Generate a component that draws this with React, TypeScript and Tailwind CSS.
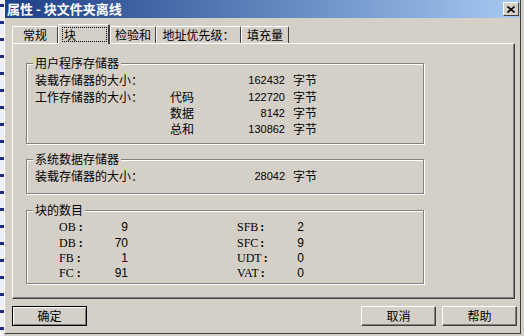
import React from "react";

const cjk = "font-['Noto_Sans_CJK_SC','Liberation_Sans',sans-serif]";
const num = "font-['Liberation_Sans','Noto_Sans_CJK_SC',sans-serif]";
const ser = "font-['Liberation_Serif','Noto_Sans_CJK_SC',serif]";

function Group({ label, children, className }: { label: string; children: React.ReactNode; className?: string }) {
  return (
    <div className={"relative border border-[#808080] shadow-[1px_1px_0_#ffffff,inset_1px_1px_0_#ffffff] " + (className || "")}>
      <div className={"absolute left-[6px] top-[-9px] h-[16px] px-[2px] bg-[#d4d0c8] text-[12px] leading-[16px] text-black " + cjk}>
        {label}
      </div>
      {children}
    </div>
  );
}

function MemRow({ a, b, n }: { a?: string; b?: string; n: string }) {
  return (
    <div className="flex h-[16px] items-center text-[12px] text-black">
      <div className={"w-[143px] pl-[8px] leading-[16px] " + cjk}>{a}</div>
      <div className={"w-[53px] leading-[16px] " + cjk}>{b}</div>
      <div className={"w-[62px] text-right text-[11px] leading-[16px] " + num}>{n}</div>
      <div className={"ml-[8px] leading-[16px] " + cjk}>字节</div>
    </div>
  );
}

function BlkRow({ a, av, b, bv, h }: { a: string; av: string; b: string; bv: string; h: string }) {
  return (
    <div className={"flex items-center text-black " + h}>
      <div className="w-[32px]" />
      <div className={"flex w-[30px] whitespace-nowrap text-[12px] leading-[15px] " + ser}>
        <span>{a}</span>
        <span className="ml-[3px] font-bold">:</span>
      </div>
      <div className={"w-[39px] text-right text-[12px] leading-[15px] " + num}>{av}</div>
      <div className="w-[109px]" />
      <div className={"flex w-[30px] whitespace-nowrap text-[12px] leading-[15px] " + ser}>
        <span>{b}</span>
        <span className="ml-[2px] font-bold">:</span>
      </div>
      <div className={"w-[37px] text-right text-[12px] leading-[15px] " + num}>{bv}</div>
    </div>
  );
}

function Tab({ label, w, selected }: { label: string; w: string; selected?: boolean }) {
  if (selected) {
    return (
      <div className={"relative z-10 h-[20px] -mb-[1px] bg-[#d4d0c8] border-t border-l border-white border-r-2 border-r-[#404040] rounded-t-[2px] pl-[3px] pt-[2px] " + w}>
        <div className={"h-[15px] w-[45px] border border-dotted border-black pl-[1px] text-[12px] leading-[13px] text-black " + cjk}>
          {label}
        </div>
      </div>
    );
  }
  return (
    <div className={"mt-[2px] h-[17px] bg-[#d4d0c8] border-t border-l border-white border-r border-r-[#404040] rounded-t-[2px] text-center text-[12px] leading-[16px] text-black " + cjk + " " + w}>
      {label}
    </div>
  );
}

function Btn({ label, def }: { label: string; def?: boolean }) {
  return (
    <div
      className={
        "h-[20px] w-[75px] flex items-center justify-center bg-[#d4d0c8] text-[12px] text-black " +
        cjk +
        (def
          ? " border border-black shadow-[inset_1px_1px_0_#ffffff,inset_-1px_-1px_0_#808080]"
          : " border-t border-l border-white border-r border-b border-r-[#404040] border-b-[#404040] shadow-[inset_-1px_-1px_0_#808080]")
      }
    >
      {label}
    </div>
  );
}

export default function App() {
  return (
    <div className="flex h-[336px] w-[524px] overflow-hidden bg-[#d4d0c8]">
      <div className="w-[4px] h-full bg-[repeating-linear-gradient(to_bottom,#eef0f6_0px,#eef0f6_4px,#1e2a86_4px,#1e2a86_7px,#eef0f6_7px,#eef0f6_17px)]" />
      <div className="flex h-[334px] w-[517px] flex-col border-l border-white border-r border-r-[#404040] border-b border-b-[#404040] bg-[#d4d0c8]">
        {/* title bar */}
        <div className="flex h-[18px] items-center justify-between bg-gradient-to-r from-[#1f3f88] to-[#a6caf0] pl-[2px] pr-[1px]">
          <div className={"text-[13px] font-bold leading-[18px] text-white " + cjk}>属性 - 块文件夹离线</div>
          <div className="flex h-[14px] w-[16px] items-center justify-center bg-[#d4d0c8] border-t border-l border-white border-r border-b border-r-[#404040] border-b-[#404040]">
            <svg width="8" height="7" viewBox="0 0 8 7">
              <path d="M0.5 0.5 L7.5 6.5 M7.5 0.5 L0.5 6.5" stroke="#000" strokeWidth="1.6" />
            </svg>
          </div>
        </div>
        {/* body */}
        <div className="flex flex-col pl-[7px] pr-[5px] pt-[6px]">
          <div className="flex h-[19px] items-start">
            <Tab label="常规" w="w-[46px]" />
            <Tab label="块" w="w-[52px]" selected />
            <Tab label="检验和" w="w-[46px]" />
            <Tab label="地址优先级：" w="w-[85px]" />
            <Tab label="填充量" w="w-[48px]" />
          </div>
          <div className="flex h-[256px] w-[503px] flex-col border-t border-l border-white border-r border-b border-r-[#404040] border-b-[#404040] pl-[13px] pt-[19px] shadow-[inset_-1px_-1px_0_#808080]">
            <Group label="用户程序存储器" className="h-[81px] w-[398px] pt-[8px]">
              <MemRow a="装载存储器的大小：" n="162432" />
              <div className="h-[1px]" />
              <MemRow a="工作存储器的大小：" b="代码" n="122720" />
              <MemRow b="数据" n="8142" />
              <MemRow b="总和" n="130862" />
            </Group>
            <Group label="系统数据存储器" className="mt-[15px] h-[35px] w-[398px] pt-[8px]">
              <MemRow a="装载存储器的大小：" n="28042" />
            </Group>
            <Group label="块的数目" className="mt-[16px] h-[74px] w-[398px] pt-[8px]">
              <BlkRow a="OB" av="9" b="SFB" bv="2" h="h-[16px]" />
              <BlkRow a="DB" av="70" b="SFC" bv="9" h="h-[16px]" />
              <BlkRow a="FB" av="1" b="UDT" bv="0" h="h-[15px]" />
              <BlkRow a="FC" av="91" b="VAT" bv="0" h="h-[15px]" />
            </Group>
          </div>
          <div className="mt-[7px] flex w-[505px] items-center">
            <div className="w-[74px]">
              <Btn label="确定" def />
            </div>
            <div className="flex-1" />
            <Btn label="取消" />
            <div className="w-[6px]" />
            <Btn label="帮助" />
          </div>
        </div>
      </div>
    </div>
  );
}
